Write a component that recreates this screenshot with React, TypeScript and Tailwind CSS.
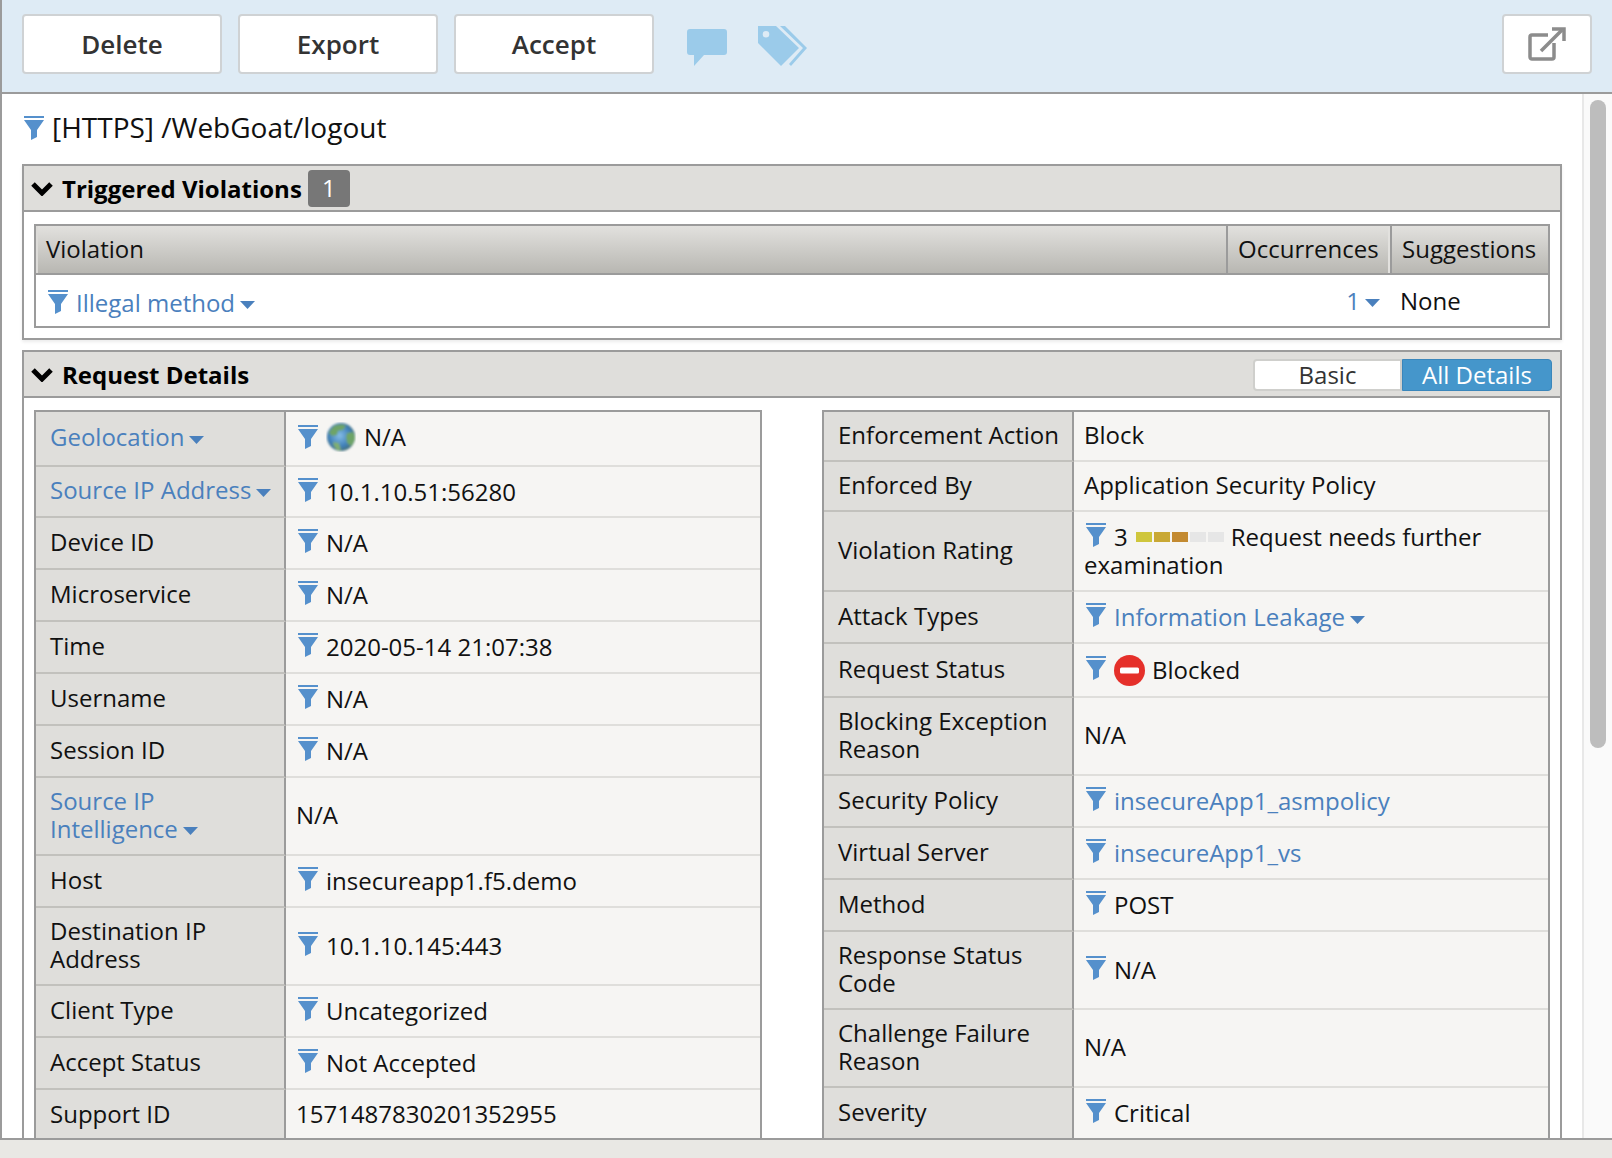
import type { ReactNode } from 'react';

function Funnel({ className = '' }: { className?: string }) {
  return (
    <svg className={`inline-block h-[24px] w-[20px] shrink-0 ${className}`} viewBox="0 0 20 24" fill="#5590cc">
      <rect x="0" y="0" width="20" height="2" />
      <path d="M0 4h20l-7 10v7l-6 3V14z" />
    </svg>
  );
}

function Caret({ className = 'ml-[5px]' }: { className?: string }) {
  return (
    <svg className={`inline-block h-[8px] w-[15px] ${className}`} viewBox="0 0 15 8" fill="#4a80bd">
      <path d="M0 0h15l-7.5 8z" />
    </svg>
  );
}

function Chevron() {
  return (
    <svg className="h-[14px] w-[22px] shrink-0" viewBox="0 0 22 14" fill="none" stroke="#000" strokeWidth="5">
      <path d="M2 2l9 9 9-9" />
    </svg>
  );
}

function Globe() {
  return (
    <svg className="mr-[8px] h-[30px] w-[30px] shrink-0" viewBox="0 0 30 30">
      <defs>
        <radialGradient id="globe" cx="45%" cy="45%" r="60%">
          <stop offset="0%" stopColor="#86bde6" />
          <stop offset="65%" stopColor="#3f7fb8" />
          <stop offset="100%" stopColor="#4a6f6a" />
        </radialGradient>
        <filter id="soft">
          <feGaussianBlur stdDeviation="0.8" />
        </filter>
      </defs>
      <g filter="url(#soft)">
        <circle cx="15" cy="15" r="14" fill="url(#globe)" />
        <path d="M8 4c4-2 10-2 12 0l-3 4-5 1-1 4-5 1-3-3c1-3 3-5 5-7z" fill="#6ea468" />
        <path d="M21 11l6-1 2 5c0 3-2 7-4 9l-4-3-1-6z" fill="#6ea468" />
        <path d="M7 20l6 1 2 7-4 0c-2-2-4-5-4-8z" fill="#7fae72" />
      </g>
    </svg>
  );
}

function Blocked() {
  return (
    <svg className="mr-[7px] h-[31px] w-[31px] shrink-0" viewBox="0 0 31 31">
      <circle cx="15.5" cy="15.5" r="15.5" fill="#e5302a" />
      <rect x="6" y="12.5" width="19" height="6" rx="1.5" fill="#fff" />
    </svg>
  );
}

function Link({ children }: { children: ReactNode }) {
  return <span className="text-[#4a80bd]">{children}</span>;
}

type RowData = {
  label: ReactNode;
  value: ReactNode;
  height: string;
  filter?: boolean;
};

function DetailTable({ rows, labelPad }: { rows: RowData[]; labelPad: string }) {
  return (
    <div className="flex w-[728px] flex-col border-x-2 border-t-2 border-[#9b9b9b]">
      {rows.map((row, i) => (
        <div key={i} className={`flex ${row.height}`}>
          <div className={`flex w-[250px] shrink-0 items-center border-r-2 border-b-2 border-r-[#9b9b9b] border-b-[#c2c1bd] bg-[#dfdedb] pr-2 pl-[14px] leading-[28px] text-[#111] ${labelPad}`}>
            <div>{row.label}</div>
          </div>
          <div className="flex min-w-0 flex-1 items-center border-b-2 border-b-[#dfdedb] bg-[#f6f5f3] pb-[2px] pl-[10px] leading-[28px] text-[#111]">
            {row.filter ? <Funnel className="mr-[8px] ml-[2px] -translate-y-[1px]" /> : null}
            <div className={row.filter ? 'flex items-center pt-[2px]' : ''}>{row.value}</div>
          </div>
        </div>
      ))}
    </div>
  );
}

const h52 = 'h-[52px]';
const h78 = 'h-[78px]';

const leftRows: RowData[] = [
  { label: <Link>Geolocation<Caret /></Link>, value: <span className="-mt-[3px] flex items-center"><Globe />N/A</span>, height: 'h-[55px]', filter: true },
  { label: <Link>Source IP Address<Caret /></Link>, value: '10.1.10.51:56280', height: 'h-[51px]', filter: true },
  { label: 'Device ID', value: 'N/A', height: h52, filter: true },
  { label: 'Microservice', value: 'N/A', height: h52, filter: true },
  { label: 'Time', value: '2020-05-14 21:07:38', height: h52, filter: true },
  { label: 'Username', value: 'N/A', height: h52, filter: true },
  { label: 'Session ID', value: 'N/A', height: h52, filter: true },
  { label: <Link>Source IP<br />Intelligence<Caret /></Link>, value: 'N/A', height: h78 },
  { label: 'Host', value: 'insecureapp1.f5.demo', height: h52, filter: true },
  { label: <>Destination IP<br />Address</>, value: '10.1.10.145:443', height: h78, filter: true },
  { label: 'Client Type', value: 'Uncategorized', height: h52, filter: true },
  { label: 'Accept Status', value: 'Not Accepted', height: h52, filter: true },
  { label: 'Support ID', value: '1571487830201352955', height: h52 },
];

const rightRows: RowData[] = [
  { label: 'Enforcement Action', value: 'Block', height: 'h-[50px]' },
  { label: 'Enforced By', value: 'Application Security Policy', height: 'h-[50px]' },
  {
    label: 'Violation Rating',
    value: (
      <div className="pt-[2px] leading-[28px]">
        <div className="flex items-center">
          <Funnel className="mr-[8px] ml-[2px] -translate-y-[2px]" />
          <span>3</span>
          <span className="mr-[7px] ml-[8px] flex gap-[2px]">
            <i className="h-[10px] w-[16px] bg-[#cfc63c]" />
            <i className="h-[10px] w-[16px] bg-[#c9a834]" />
            <i className="h-[10px] w-[16px] bg-[#c38a30]" />
            <i className="h-[10px] w-[16px] bg-[#e6e6e6]" />
            <i className="h-[10px] w-[16px] bg-[#e6e6e6]" />
          </span>
          <span>Request needs further</span>
        </div>
        <div>examination</div>
      </div>
    ),
    height: 'h-[80px]',
  },
  { label: 'Attack Types', value: <Link>Information Leakage<Caret /></Link>, height: h52, filter: true },
  { label: 'Request Status', value: <><Blocked />Blocked</>, height: 'h-[54px]', filter: true },
  { label: <>Blocking Exception<br />Reason</>, value: 'N/A', height: h78 },
  { label: 'Security Policy', value: <Link>insecureApp1_asmpolicy</Link>, height: h52, filter: true },
  { label: 'Virtual Server', value: <Link>insecureApp1_vs</Link>, height: h52, filter: true },
  { label: 'Method', value: 'POST', height: h52, filter: true },
  { label: <>Response Status<br />Code</>, value: 'N/A', height: h78, filter: true },
  { label: <>Challenge Failure<br />Reason</>, value: 'N/A', height: h78 },
  { label: 'Severity', value: 'Critical', height: h52, filter: true },
];

function ToolButton({ children }: { children: ReactNode }) {
  return (
    <button type="button" className="flex h-[60px] w-[200px] items-center justify-center rounded-[4px] border-2 border-[#cfd2d4] bg-white text-[26px] font-semibold text-[#333]">
      {children}
    </button>
  );
}

export default function App() {
  return (
    <main className="flex h-[1158px] w-[1612px] flex-col overflow-hidden bg-[#e9e8e4] font-['Open_Sans',sans-serif] text-[24px]">
      <header className="flex h-[94px] shrink-0 items-start border-b-2 border-l-2 border-[#9b9b9b] bg-[#deebf5] pt-[14px] pl-[20px]">
        <div className="flex gap-[16px]">
          <ToolButton>Delete</ToolButton>
          <ToolButton>Export</ToolButton>
          <ToolButton>Accept</ToolButton>
        </div>
        <svg className="mt-[15px] ml-[33px] h-[37px] w-[40px]" viewBox="0 0 40 37" fill="#9bcbea">
          <path d="M3 0h34a3 3 0 0 1 3 3v20a3 3 0 0 1-3 3H17L7 37V26H3a3 3 0 0 1-3-3V3a3 3 0 0 1 3-3z" />
        </svg>
        <svg className="mt-[12px] ml-[31px] h-[41px] w-[49px]" viewBox="0 0 49 41" fill="#9bcbea">
          <path fillRule="evenodd" d="M0 0h18l23 22-18 18L0 17zm8 5a3.3 3.3 0 1 0 0 6.6A3.3 3.3 0 0 0 8 5z" />
          <path d="M22 0h5l22 22-16 18-2-2 14-16z" />
        </svg>
        <button type="button" className="mr-[20px] ml-auto flex h-[60px] w-[90px] items-center justify-center rounded-[4px] border-2 border-[#cfd2d4] bg-white">
          <svg className="h-[34px] w-[38px]" viewBox="0 0 38 34" fill="none" stroke="#8c8c8c" strokeWidth="3.5">
            <path d="M26 16v14a2 2 0 0 1-2 2H4a2 2 0 0 1-2-2V10a2 2 0 0 1 2-2h16" />
            <path d="M13 24L34 3" />
            <path d="M24 2h12v12" />
          </svg>
        </button>
      </header>

      <div className="flex h-[1046px] shrink-0 overflow-hidden border-b-2 border-l-2 border-[#9b9b9b] bg-white">
        <div className="min-w-0 flex-1 overflow-hidden pr-[20px] pl-[20px]">
          <h1 className="flex h-[70px] items-center pb-[4px] text-[28px] text-[#111]">
            <Funnel className="mr-[8px] ml-[2px] translate-y-[1px]" />
            [HTTPS] /WebGoat/logout
          </h1>

          <section className="h-[176px] border-2 border-t-0 border-[#9b9b9b] shadow-[0_2px_3px_rgba(0,0,0,0.08)]">
            <div className="-mx-[2px] flex h-[48px] items-center gap-[9px] border-2 border-[#9b9b9b] bg-[#dfdedb] pt-[2px] pl-[7px] font-bold text-black">
              <Chevron />
              <span className="text-[24px]">Triggered Violations</span>
              <span className="-mt-[2px] ml-[-3px] flex h-[37px] w-[42px] items-center justify-center rounded-[4px] bg-[#777] font-normal text-white">1</span>
            </div>
            <div className="mx-[10px] mt-[12px] h-[104px] border-2 border-[#9b9b9b]">
              <div className="flex h-[49px] border-b-2 border-[#9b9b9b] bg-gradient-to-b from-[#e2e1de] to-[#b8b7b2] leading-[46px] text-[#111]">
                <div className="flex-1 border-l-2 border-l-[#dcdbd8] pl-[8px]">Violation</div>
                <div className="w-[164px] border-x-2 border-x-[#9b9b9b] border-r-[#e2e1de] pl-[10px]">Occurrences</div>
                <div className="w-[158px] border-l-2 border-l-[#9b9b9b] pl-[10px]">Suggestions</div>
              </div>
              <div className="flex h-[51px] items-center bg-white text-[#111]">
                <div className="flex flex-1 items-center pl-[12px]">
                  <Funnel className="mr-[8px] translate-y-[1px]" />
                  <span className="pt-[4px]"><Link>Illegal method<Caret /></Link></span>
                </div>
                <div className="w-[164px] pr-[10px] text-right"><Link>1<Caret /></Link></div>
                <div className="w-[158px] pl-[10px]">None</div>
              </div>
            </div>
          </section>

          <section className="mt-[10px] border-x-2 border-[#9b9b9b]">
            <div className="-mx-[2px] flex h-[48px] items-center gap-[9px] border-2 border-[#9b9b9b] bg-[#dfdedb] pt-[2px] pl-[7px] text-black">
              <Chevron />
              <span className="text-[24px] font-bold">Request Details</span>
              <div className="mr-[8px] ml-auto flex h-[32px] w-[299px] leading-[28px]">
                <div className="w-[149px] rounded-l-[4px] border-2 border-[#cfcfcc] bg-white text-center text-[#333]">Basic</div>
                <div className="w-[150px] rounded-r-[4px] border-1 border-[#3a86bb] bg-[#4596cb] text-center leading-[30px] text-white">All Details</div>
              </div>
            </div>
            <div className="mt-[12px] flex justify-between px-[10px]">
              <DetailTable rows={leftRows} labelPad="pb-[3px]" />
              <DetailTable rows={rightRows} labelPad="pb-[3px]" />
            </div>
          </section>
        </div>
        <aside className="w-[30px] shrink-0 border-l-2 border-[#e8e8e8] bg-[#fafafa]">
          <div className="mt-[6px] ml-[6px] h-[648px] w-[16px] rounded-[8px] bg-[#bdbdbd]" />
        </aside>
      </div>
    </main>
  );
}
